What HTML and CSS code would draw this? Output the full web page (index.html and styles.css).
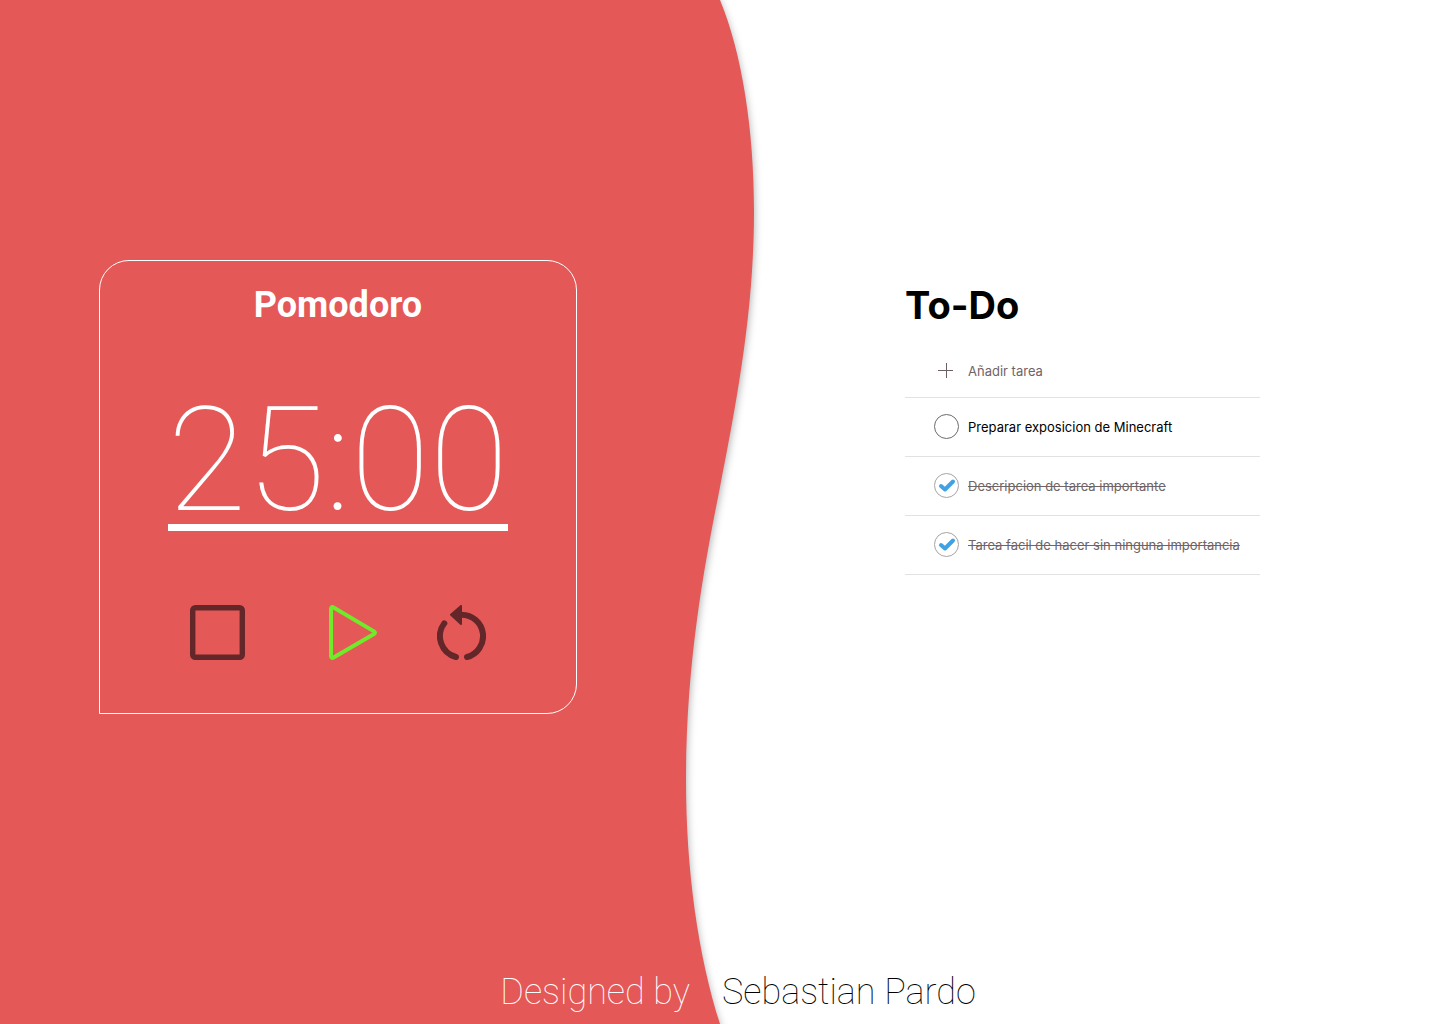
FILE: index.html
```html
<!DOCTYPE html>
<html lang="es">
<head>
  <meta charset="utf-8">
  <meta name="viewport" content="width=device-width, initial-scale=1">
  <title>Pomodoro</title>
  <link rel="stylesheet" href="styles.css">
</head>
<body>
  <svg class="wave" viewBox="0 0 1440 1024" preserveAspectRatio="none" aria-hidden="true">
    <path d="M-20 -20H711L720 0C742 53 754 130 754 211C754 310 737 400 720 487C703 572 686 666 686 780C686 870 698 955 720 1024L726 1044H-20Z"/>
  </svg>
  <main class="panels">
    <section class="timer">
      <h1 class="title">Pomodoro</h1>
      <time class="clock">25:00</time>
      <div class="controls">
        <button class="control" type="button" aria-label="Detener">
          <svg width="55" height="55" viewBox="0 0 55 55"><rect x="2.7" y="2.7" width="49.6" height="49.6" rx="2.6" stroke-width="5.4"/></svg>
        </button>
        <button class="control control-play" type="button" aria-label="Iniciar">
          <svg width="48" height="55" viewBox="0 0 48 55"><path d="M2 4V51Q2 54 4.600 52.500L45 29Q47 27.700 45 26.400L4.600 2.500Q2 1 2 4Z" stroke-width="4"/></svg>
        </button>
        <button class="control" type="button" aria-label="Reiniciar">
          <svg width="49" height="55" viewBox="0 0 49 55"><path d="M30 52A21.500 21.500 0 0 0 24.500 9.700M7.300 18.300A21.500 21.500 0 0 0 19 52" stroke-width="6" stroke-linecap="round"/><path class="arrow" d="M14 9.800L24 1V19Z" stroke-width="2" stroke-linejoin="round"/></svg>
        </button>
      </div>
    </section>
    <section class="todo">
      <h2 class="title todo-title">To-Do</h2>
      <form class="row row-add">
        <label class="mark" for="new-task" aria-label="Nueva tarea">
          <svg width="25" height="25" viewBox="0 0 25 25"><path class="plus" d="M12.500 5V20M4 12.500H19"/></svg>
        </label>
        <input class="new-task" id="new-task" type="text" placeholder="Añadir tarea">
      </form>
      <ul class="tasks">
        <li class="row">
          <span class="mark"><input class="check" id="task-1" type="checkbox"></span>
          <label class="task" for="task-1">Preparar exposicion de Minecraft</label>
        </li>
        <li class="row">
          <span class="mark"><input class="check" id="task-2" type="checkbox" checked>
            <svg class="tick" width="25" height="25" viewBox="0 0 25 25"><path d="M7 13L11 16.500L19 8.500"/></svg></span>
          <label class="task task-done" for="task-2">Descripcion de tarea importante</label>
        </li>
        <li class="row">
          <span class="mark"><input class="check" id="task-3" type="checkbox" checked>
            <svg class="tick" width="25" height="25" viewBox="0 0 25 25"><path d="M7 13L11 16.500L19 8.500"/></svg></span>
          <label class="task task-done" for="task-3">Tarea facil de hacer sin ninguna importancia</label>
        </li>
      </ul>
    </section>
  </main>
  <footer class="credits">
    <span class="credit-by">Designed by</span>
    <span class="credit-name">Sebastian Pardo</span>
  </footer>
</body>
</html>
```
FILE: styles.css
```css
* {
  box-sizing: border-box;
}

body {
  margin: 0;
  min-height: 100vh;
  display: flex;
  flex-direction: column;
  position: relative;
  background: #fff;
  font-family: Roboto, sans-serif;
}

.wave {
  position: absolute;
  inset: 0;
  z-index: -1;
  width: 100%;
  height: 100%;
  fill: #e45857;
}

.wave path {
  filter: drop-shadow(0 4px 4px rgba(0, 0, 0, 0.35));
}

.panels {
  flex: 1;
  display: grid;
  grid-template-columns: 1fr 1fr;
  align-content: center;
  align-items: start;
  justify-items: center;
  padding-top: 2px;
}

.title {
  margin: 0;
  font-size: 36px;
  font-weight: 700;
  line-height: 42px;
}

.timer {
  display: flex;
  flex-direction: column;
  align-items: center;
  width: 478px;
  max-width: 90%;
  margin-right: 44px;
  padding: 23px 0 53px;
  border: 1px solid #fff;
  border-radius: 30px 30px 30px 0;
  color: #fff;
}

.clock {
  margin-top: 72px;
  border-bottom: 7px solid #fff;
  font-size: 144px;
  font-weight: 100;
  line-height: 126px;
}

.controls {
  display: flex;
  gap: 60px;
  margin-top: 74px;
}

.control {
  padding: 0;
  border: 0;
  background: none;
  color: #642729;
  cursor: pointer;
}

.control-play {
  margin-left: 24px;
  color: #70ea2b;
}

.control svg {
  display: block;
  fill: none;
  stroke: currentColor;
}

.control .arrow {
  fill: currentColor;
}

.todo {
  width: 355px;
  max-width: 90%;
  margin-left: 5px;
  padding-top: 24px;
  font-family: Inter, sans-serif;
}

.todo-title {
  color: #000;
  font-size: 38px;
}

.row {
  display: flex;
  align-items: center;
  gap: 9px;
  height: 59px;
  padding-left: 29px;
  border-bottom: 1px solid #e2e2e2;
}

.row-add {
  height: 53px;
  margin-top: 19px;
}

.tasks {
  margin: 0;
  padding: 0;
  list-style: none;
}

.mark {
  display: grid;
  flex: none;
}

.mark > * {
  grid-area: 1 / 1;
}

.plus {
  stroke: #6b6062;
  stroke-width: 1;
}

.check {
  appearance: none;
  width: 25px;
  height: 25px;
  margin: 0;
  border: 1px solid #6b6b6b;
  border-radius: 50%;
}

.check:checked {
  border-color: #a9a3a4;
}

.tick {
  fill: none;
  stroke: #40a2e3;
  stroke-width: 4;
  stroke-linecap: round;
  stroke-linejoin: round;
  pointer-events: none;
}

.task,
.new-task {
  color: #000;
  font-family: inherit;
  font-size: 13px;
  line-height: 18px;
  white-space: nowrap;
}

.task-done {
  color: #6f6466;
  text-decoration: line-through;
}

.new-task {
  flex: 1;
  min-width: 0;
  padding: 0;
  border: 0;
  outline: 0;
  background: none;
}

.new-task::placeholder {
  color: #6f6466;
  opacity: 1;
}

.credits {
  display: grid;
  grid-template-columns: 1fr 1fr;
  padding-bottom: 11px;
  font-size: 36px;
  font-weight: 100;
  line-height: 42px;
}

.credit-by {
  padding-right: 30px;
  color: #fff;
  text-align: right;
}

.credit-name {
  padding-left: 2px;
  color: #000;
}
```
